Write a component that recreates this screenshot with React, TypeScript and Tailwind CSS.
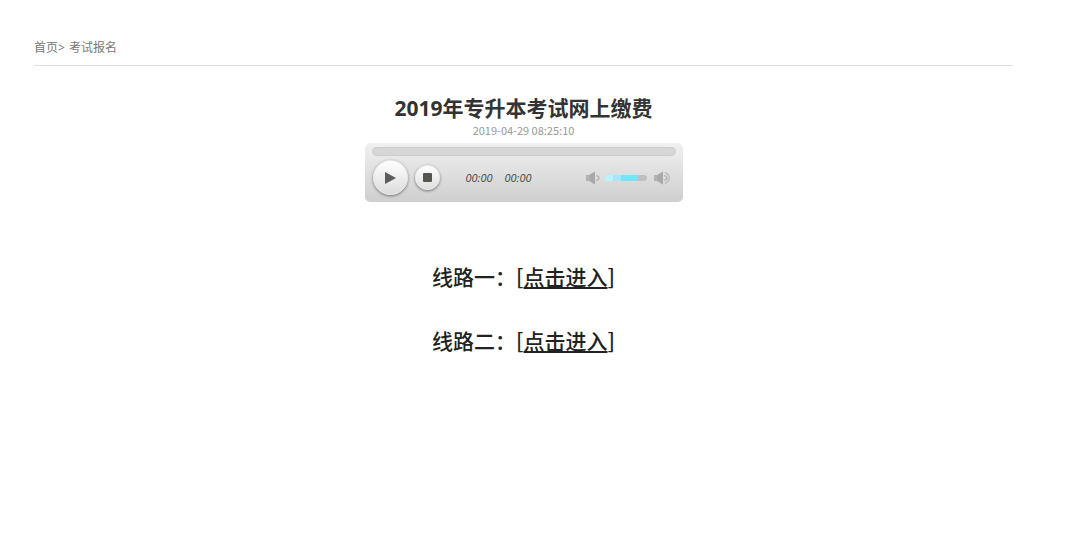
import { useState } from "react";

const routes = [
  { label: "线路一：", href: "#route-1" },
  { label: "线路二：", href: "#route-2" },
];

function SpeakerIcon({ loud = false }: { loud?: boolean }) {
  return (
    <svg width="17" height="14" viewBox="0 0 17 14" fill="none" aria-hidden="true">
      <path d="M1 4H4.4L10 0.6V13.4L4.4 10H1Z" fill="#b3b3b3" />
      <path d="M4.4 4L10 0.6V13.4L4.4 10Z" fill="#a9a9a9" />
      <path d="M11.2 4.6Q13.8 4.8 13.8 7Q13.8 9.2 11.2 9.4" stroke="#b3b3b3" strokeWidth="1.4" />
      {loud && <path d="M12 1.6Q16.2 2.8 16.2 7Q16.2 11.2 12 12.4" stroke="#b8b8b8" strokeWidth="1.2" />}
    </svg>
  );
}

function AudioPlayer() {
  const [playing, setPlaying] = useState(false);
  const [position, setPosition] = useState(0);
  const [volume, setVolume] = useState(78);

  const handleStop = () => {
    setPlaying(false);
    setPosition(0);
  };

  return (
    <div className="mt-[5px] w-[318px] max-w-full rounded-[5px] bg-linear-to-b from-[#f0f0f0] to-[#cfcfcf] px-[7px] pt-1 pb-[7px]">
      <input
        type="range"
        aria-label="播放进度"
        value={position}
        onChange={(e) => setPosition(Number(e.target.value))}
        className="block h-[9px] w-full appearance-none rounded-full border border-[#cccccc] bg-[#d6d6d6] [&::-webkit-slider-thumb]:size-0 [&::-webkit-slider-thumb]:appearance-none"
      />
      <div className="flex items-center pt-1 pl-px">
        <button
          type="button"
          aria-label="播放"
          aria-pressed={playing}
          onClick={() => setPlaying(!playing)}
          className="flex size-[35px] items-center justify-center rounded-full border border-[#e8e8e8] bg-linear-to-b from-white to-[#dcdcdc] shadow-[0_1px_3px_#00000077]"
        >
          <svg width="12" height="14" viewBox="0 0 12 14" aria-hidden="true">
            <path d="M1 1L12 7L1 13Z" fill="#5b5b57" />
          </svg>
        </button>
        <button
          type="button"
          aria-label="停止"
          onClick={handleStop}
          className="ml-[7px] flex size-[25px] items-center justify-center rounded-full border border-[#ebebeb] bg-linear-to-b from-white to-[#dedede] shadow-[0_1px_3px_#00000077]"
        >
          <span className="size-[9px] rounded-[1px] bg-[#555551]" />
        </button>
        <div className="ml-[26px] flex gap-3 font-['Open_Sans','Noto_Sans',sans-serif] text-[11px] leading-4 text-[#444] italic">
          <span>00:00</span>
          <span>00:00</span>
        </div>
        <div className="mr-1.5 ml-auto flex items-center gap-[3px]">
          <SpeakerIcon />
          <input
            type="range"
            aria-label="音量"
            value={volume}
            onChange={(e) => setVolume(Number(e.target.value))}
            style={{
              backgroundImage: `linear-gradient(to right, #b9f3ff 0 18%, #a6e5fb 18% 38%, #72e5fc 38% ${volume}%, #bfbfbf ${volume}%)`,
            }}
            className="block h-1.5 w-[42px] appearance-none rounded-full [&::-webkit-slider-thumb]:size-0 [&::-webkit-slider-thumb]:appearance-none"
          />
          <span className="ml-[3px]">
            <SpeakerIcon loud />
          </span>
        </div>
      </div>
    </div>
  );
}

export default function App() {
  return (
    <div className="min-h-screen bg-white pt-[38px] pr-[67px] pl-[34px] font-['Noto_Sans','Noto_Sans_CJK_SC',sans-serif]">
      <nav className="flex gap-1 border-b border-[#dedede] pb-[7px] text-[12px] leading-5 text-[#777]">
        <span>
          <a href="#home">首页</a>&gt;
        </span>
        <a href="#exam">考试报名</a>
      </nav>

      <main className="flex flex-col items-center pt-7">
        <h1 className="text-[21px] leading-7 font-bold text-[#333]">2019年专升本考试网上缴费</h1>
        <time
          dateTime="2019-04-29T08:25:10"
          className="font-['Noto_Sans_CJK_SC',sans-serif] text-[11px] leading-4 text-[#999]"
        >
          2019-04-29 08:25:10
        </time>

        <AudioPlayer />

        <div className="mt-[58px] flex flex-col gap-8 font-['Noto_Sans_CJK_SC',sans-serif] text-[21px] leading-8 font-medium text-[#222]">
          {routes.map((route) => (
            <p key={route.href}>
              {route.label}[
              <a href={route.href} className="underline decoration-2 underline-offset-2">
                点击进入
              </a>
              ]
            </p>
          ))}
        </div>
      </main>
    </div>
  );
}
